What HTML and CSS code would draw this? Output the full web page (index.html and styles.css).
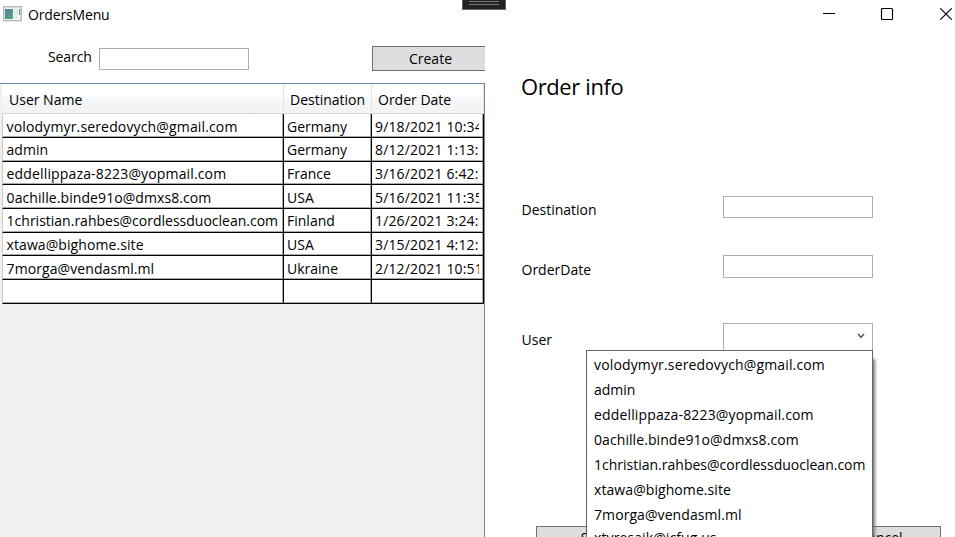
FILE: index.html
```html
<!DOCTYPE html>
<html lang="en">
<head>
<meta charset="utf-8">
<title>OrdersMenu</title>
<link rel="stylesheet" href="styles.css">
</head>
<body>
<div class="window">
  <header class="titlebar">
    <svg class="app-icon" width="19" height="16" viewBox="0 0 19 16">
      <defs><linearGradient id="g" x1="0" y1="0" x2="1" y2="1"><stop offset="0" stop-color="#4a7fb0"/><stop offset="1" stop-color="#55a96c"/></linearGradient></defs>
      <rect x=".75" y=".75" width="17.5" height="14" fill="#f2f3f4" stroke="#a9afb5" stroke-width="1.2"/>
      <rect x="2" y="3" width="8" height="10" fill="url(#g)"/>
      <rect x="11" y="3" width="4" height="10" fill="#e6e8ea"/>
      <rect x="16" y="3" width="1.2" height="6" fill="#559a86"/>
    </svg>
    <span class="title">OrdersMenu</span>
    <svg class="controls" width="133" height="14" viewBox="0 0 133 14" fill="none" stroke="#000">
      <path d="M1 6.500H13" stroke-width="1"/>
      <rect x="59.500" y="1.500" width="11" height="11" rx="1" stroke-width="1.200"/>
      <path d="M118.300 1.300L129.700 12.700M129.700 1.300L118.300 12.700" stroke-width="1.200"/>
    </svg>
    <div class="debug-handle"></div>
  </header>
  <main class="content">
    <section class="orders">
      <div class="toolbar">
        <label class="search-label" for="search">Search</label>
        <input class="box" id="search">
        <button class="btn create">Create</button>
      </div>
      <div class="grid">
        <div class="row head"><div>User Name</div><div>Destination</div><div>Order Date</div></div>
        <div class="row"><div class="wide">volodymyr.seredovych@gmail.com</div><div>Germany</div><div><span>9/18/2021 10:34:</span></div></div>
        <div class="row up"><div>admin</div><div>Germany</div><div><span>8/12/2021 1:13:</span></div></div>
        <div class="row short up"><div class="wide">eddellippaza-8223@yopmail.com</div><div>France</div><div><span>3/16/2021 6:42:</span></div></div>
        <div class="row"><div class="mid">0achille.binde91o@dmxs8.com</div><div>USA</div><div><span>5/16/2021 11:35:</span></div></div>
        <div class="row up"><div>1christian.rahbes@cordlessduoclean.com</div><div>Finland</div><div><span>1/26/2021 3:24:</span></div></div>
        <div class="row short up"><div class="mid">xtawa@bighome.site</div><div>USA</div><div><span>3/15/2021 4:12:</span></div></div>
        <div class="row"><div class="mid">7morga@vendasml.ml</div><div>Ukraine</div><div><span>2/12/2021 10:51:</span></div></div>
        <div class="row"><div></div><div></div><div></div></div>
      </div>
    </section>
    <section class="info">
      <h1>Order info</h1>
      <div class="form">
        <label for="dest">Destination</label><input class="box" id="dest">
        <label class="date-label" for="date">OrderDate</label><input class="box tall" id="date">
        <label class="user-label" for="user">User</label>
        <div class="combo" id="user">
          <svg width="8" height="6" viewBox="0 0 8 6" fill="none" stroke="#606060" stroke-width="1.600"><path d="M1 1L4 4.300L7 1"/></svg>
          <ul class="menu">
            <li class="wide">volodymyr.seredovych@gmail.com</li>
            <li>admin</li>
            <li class="wide">eddellippaza-8223@yopmail.com</li>
            <li class="mid">0achille.binde91o@dmxs8.com</li>
            <li>1christian.rahbes@cordlessduoclean.com</li>
            <li class="mid">xtawa@bighome.site</li>
            <li class="mid">7morga@vendasml.ml</li>
            <li class="last">xtyresajk@jcfug.us</li>
          </ul>
        </div>
      </div>
      <div class="actions"><button class="btn">Save</button><button class="btn">Cancel</button></div>
    </section>
  </main>
</div>
</body>
</html>
```
FILE: styles.css
```css
* { box-sizing: border-box; }
body { margin: 0; background: #fff; }
.window {
  width: 955px; height: 537px; overflow: hidden; position: relative;
  display: flex; flex-direction: column;
  font: 14px/20px "Open Sans", "Noto Sans", sans-serif; color: #000;
}
.titlebar { height: 30px; flex: none; display: flex; align-items: center; padding: 0 0 2px 3px; }
.title { margin: 1px 0 0 6px; flex: 1; letter-spacing: -0.15px; }
.controls { flex: none; }
.debug-handle {
  position: absolute; left: 462px; top: 0; width: 44px; height: 10px;
  border: 1px solid #666; border-top: 0;
  background: linear-gradient(#777 1px, #222 1px, #222 3px, #777 3px, #777 4px, #222 4px) 6px 1px / 30px 5px no-repeat #222;
}
.content { flex: 1; display: flex; min-height: 0; }
.orders { width: 485px; flex: none; display: flex; flex-direction: column; overflow: hidden; }
.toolbar { height: 53px; flex: none; display: flex; align-items: flex-start; padding: 16px 0 0 48px; }
.search-label { width: 51px; flex: none; margin-top: 1px; letter-spacing: -0.1px; }
.box { width: 150px; height: 22px; flex: none; margin: 2px 0 0; padding: 0; border: 1px solid #abadb3; border-radius: 0; background: #fff; }
.box.tall { height: 23px; }
.btn {
  border: 1px solid #707070; border-radius: 0; background: #ddd; color: #000; padding: 0;
  font: inherit; width: 120px; height: 27px; flex: none;
}
.create { width: 117px; height: 25px; margin-left: 123px; }
.grid { flex: 1; border: 1px solid #688caf; border-width: 1px 1px 0 0; background: #f0f0f0; padding-left: 2px; }
.row { display: grid; grid-template-columns: 282px 88px 112px; height: 24px; line-height: 21px; }
.row.short { height: 23px; }
.row > div {
  background: #fff; border-right: 1px solid #000; border-bottom: 1px solid #000;
  box-shadow: inset -1px -1px #aaa; padding: 2px 4px 0 3px; white-space: nowrap; overflow: hidden;
}
.row.up > div { padding-top: 1px; }
.row > div:first-child { border-left: 1px solid #ccc; padding-left: 3.6px; }
.row > div span { display: block; overflow: hidden; letter-spacing: 0.15px; }
.row.head { height: 30px; line-height: 30px; }
.row.head > div {
  background: linear-gradient(#fff 0, #fff 12px, #f7f8fa 13px, #f1f2f4 100%);
  border: 0; border-right: 1px solid #e2e3e5; border-bottom: 1px solid #d5d5d5;
  box-shadow: none; padding: 1px 6px 0;
}
.row.head > div:first-child { padding-left: 7px; }
.wide { letter-spacing: 0.15px; }
.mid { letter-spacing: 0.08px; }
.info { flex: 1; display: flex; flex-direction: column; padding-left: 36px; }
h1 { margin: 39px 0 1px; font-size: 22px; line-height: 34px; font-weight: 400; letter-spacing: -0.4px; }
.form { display: grid; grid-template-columns: 202px 150px; grid-template-rows: 59px 68px 60px; margin-top: 90px; align-items: start; }
.form label { margin-top: 6px; padding-left: 0.5px; }
.form .date-label { margin-top: 7px; }
.form .user-label { margin-top: 9px; }
.form .box { margin: 2px 0 0; }
.combo { position: relative; width: 150px; height: 28px; margin-top: 2px; border: 1px solid #abadb3; }
.combo > svg { position: absolute; right: 7px; top: 9px; }
.menu {
  position: absolute; right: -1px; top: 26px; width: 287px; height: 230px; margin: 0; padding: 1px 0 0 7px;
  list-style: none; background: #fff; border: 1px solid #646464; box-shadow: 4px 7px 3px -2px #777;
  white-space: nowrap; overflow: hidden; line-height: 25px;
}
.menu .last { line-height: 22px; letter-spacing: 0.1px; }
.actions { display: flex; justify-content: space-between; width: 405px; margin: 145px 0 0 15px; }
.actions .btn { padding-bottom: 3px; }
```
